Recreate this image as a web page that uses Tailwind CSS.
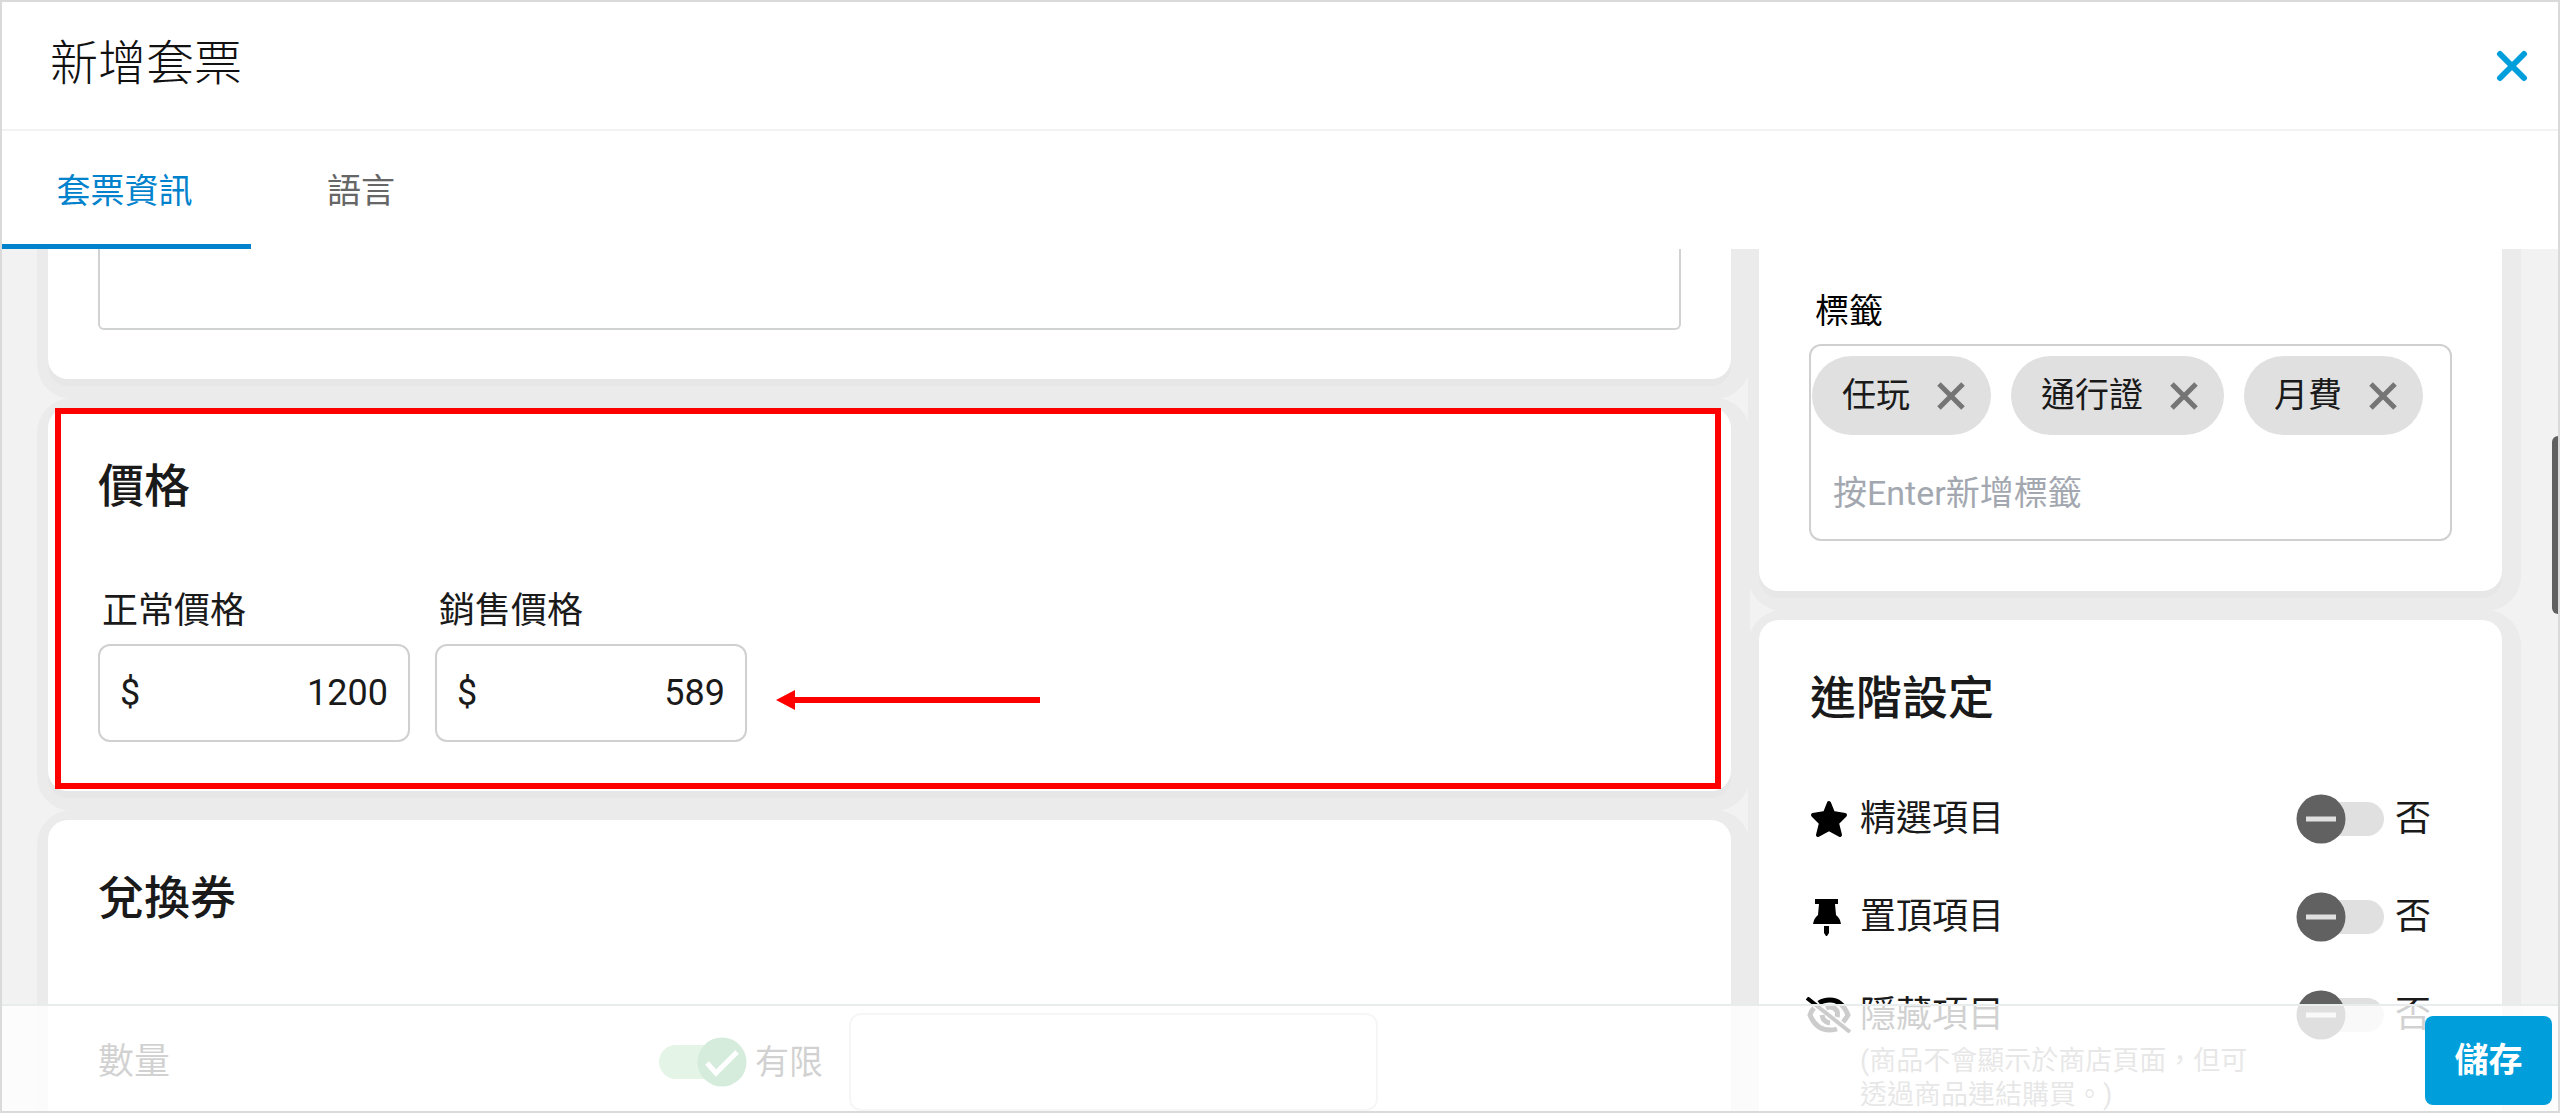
<!DOCTYPE html>
<html lang="zh-Hant">
<head>
    <meta charset="UTF-8">
    <meta name="viewport" content="width=device-width, initial-scale=1.0">
    <title>新增套票</title>
    <script src="https://cdn.jsdelivr.net/npm/@tailwindcss/browser@4"></script>
</head>
<body class="font-[Roboto,'Noto_Sans_CJK_TC',sans-serif] text-[#1a1a1a]">
    <div class="relative flex h-screen flex-col overflow-hidden border-2 border-[#dadada] bg-white">
        <header class="flex h-[129px] shrink-0 items-center justify-between border-b-2 border-[#f2f2f2] pl-12 pr-7">
            <h1 class="pb-1 text-[48px] leading-[56px] font-light text-[#111]">新增套票</h1>
            <button type="button" aria-label="關閉" class="p-0.5">
                <svg class="size-8" viewBox="0 0 32 32" fill="none" stroke="#009fdb" stroke-width="6" stroke-linecap="round"><path d="M4 4l24 24M28 4L4 28"/></svg>
            </button>
        </header>

        <nav class="flex h-[118px] shrink-0 text-[34px]">
            <button type="button" class="w-[249px] border-b-[5px] border-[#0082cd] pt-2 pr-1 text-[#0082cd]">套票資訊</button>
            <button type="button" class="w-[220px] border-b-[5px] border-transparent pt-2 text-[#666]">語言</button>
        </nav>

        <main class="flex min-h-0 flex-1 items-start gap-7 overflow-hidden bg-[#f2f2f2] pl-[46px] pr-[56px]">
            <div class="flex min-w-0 flex-1 flex-col gap-[29px]">
                <section class="rounded-b-[20px] bg-white px-[50px] pb-[49px] shadow-[0_7px_0_0_#e7e7e7,4px_5px_0_15px_#ebebeb]">
                    <textarea aria-label="說明" class="block h-[81px] w-full resize-none rounded-b-[6px] border-2 border-t-0 border-[#d0d3d2]"></textarea>
                </section>

                <section class="relative rounded-[20px] bg-white px-[50px] pt-[50px] pb-[49px] shadow-[0_7px_0_0_#e7e7e7,4px_5px_0_15px_#ebebeb]">
                    <h2 class="text-[46px] leading-[56px] font-medium">價格</h2>
                    <div class="mt-[77px] flex items-end gap-[25px]">
                        <div class="w-[312px]">
                            <label for="normalPrice" class="block pl-1 text-[36px] leading-[40px]">正常價格</label>
                            <div class="mt-[13px] flex h-[98px] items-center rounded-[12px] border-2 border-[#d0d0d0] px-5 text-[36px]">
                                <span>$</span>
                                <input id="normalPrice" type="text" value="1200" class="w-full min-w-0 text-right outline-none">
                            </div>
                        </div>
                        <div class="w-[312px]">
                            <label for="salePrice" class="block pl-1 text-[36px] leading-[40px]">銷售價格</label>
                            <div class="mt-[13px] flex h-[98px] items-center rounded-[12px] border-2 border-[#d0d0d0] px-5 text-[36px]">
                                <span>$</span>
                                <input id="salePrice" type="text" value="589" class="w-full min-w-0 text-right outline-none">
                            </div>
                        </div>
                        <svg class="mb-8 ml-1 h-5 w-[264px]" viewBox="0 0 264 20" fill="#f00"><path d="M0 10L19 0v20z"/><path d="M18 7h246v6H18z"/></svg>
                    </div>
                    <!-- highlight frame -->
                    <div class="pointer-events-none absolute top-0 right-[10px] bottom-[2px] left-[7px] border-[6px] border-[#f00]"></div>
                </section>

                <section class="rounded-[20px] bg-white px-[50px] pt-[50px] pb-[49px] shadow-[0_7px_0_0_#e7e7e7,4px_5px_0_15px_#ebebeb]">
                    <h2 class="text-[46px] leading-[56px] font-medium">兌換券</h2>
                    <div class="mt-[87px] flex items-center">
                        <label for="quantity" class="w-[561px] text-[36px]">數量</label>
                        <label class="flex items-center gap-2 text-[34px]">
                            <span class="relative flex h-[50px] w-[88px] items-center">
                                <input type="checkbox" checked class="h-[34px] w-20 appearance-none rounded-full bg-[#78c882]">
                                <svg class="absolute top-0 right-0 size-[50px]" viewBox="0 0 50 50"><circle cx="25" cy="25" r="24.5" fill="#2da055"/><path d="M10 26l9 10L40 15" fill="none" stroke="#fff" stroke-width="5"/></svg>
                            </span>
                            有限
                        </label>
                        <input id="quantity" type="text" class="ml-[26px] h-[98px] w-[529px] rounded-[12px] border-2 border-[#d0d0d0]">
                    </div>
                </section>
            </div>

            <div class="flex w-[743px] shrink-0 flex-col gap-[29px]">
                <section class="rounded-b-[20px] bg-white px-[50px] pt-[42px] pb-[50px] shadow-[0_7px_0_0_#e7e7e7,4px_5px_0_15px_#ebebeb]">
                    <label for="tags" class="block pl-1.5 text-[34px] leading-[40px] text-black">標籤</label>
                    <div class="mt-[13px] h-[197px] rounded-[12px] border-2 border-[#d0d0d0] pt-[10px]">
                        <div class="flex gap-5 pl-px text-[34px]">
                            <span class="flex h-[79px] items-center gap-[27px] rounded-full bg-[#e0e0e0] pr-[26px] pl-[30px]">任玩
                                <button type="button" aria-label="移除任玩"><svg class="size-7" viewBox="0 0 28 28" fill="none" stroke="#757575" stroke-width="5"><path d="M2 2l24 24M26 2L2 26"/></svg></button>
                            </span>
                            <span class="flex h-[79px] items-center gap-[27px] rounded-full bg-[#e0e0e0] pr-[26px] pl-[30px]">通行證
                                <button type="button" aria-label="移除通行證"><svg class="size-7" viewBox="0 0 28 28" fill="none" stroke="#757575" stroke-width="5"><path d="M2 2l24 24M26 2L2 26"/></svg></button>
                            </span>
                            <span class="flex h-[79px] items-center gap-[27px] rounded-full bg-[#e0e0e0] pr-[26px] pl-[30px]">月費
                                <button type="button" aria-label="移除月費"><svg class="size-7" viewBox="0 0 28 28" fill="none" stroke="#757575" stroke-width="5"><path d="M2 2l24 24M26 2L2 26"/></svg></button>
                            </span>
                        </div>
                        <input id="tags" type="text" placeholder="按Enter新增標籤" class="mt-[18px] h-20 w-full px-[22px] text-[34px] outline-none placeholder:text-[#a3a8b0]">
                    </div>
                </section>

                <section class="rounded-[20px] bg-white py-[50px] pr-[71px] pl-[51px] shadow-[0_7px_0_0_#e7e7e7,4px_5px_0_15px_#ebebeb]">
                    <h2 class="text-[46px] leading-[56px] font-medium">進階設定</h2>
                    <div class="mt-[68px] flex flex-col gap-12 text-[36px]">
                        <label class="flex h-[50px] items-center">
                            <span class="w-[50px]"><svg class="size-[38px]" viewBox="0 0 38 38" fill="#000" stroke="#000" stroke-width="4" stroke-linejoin="round"><path d="M19 3l4 10 12 2-8 8 3 12-11-6-11 6 3-12-8-8 12-2z"/></svg></span>
                            <span class="flex-1">精選項目</span>
                            <span class="relative flex h-[50px] w-[88px] items-center justify-end">
                                <input type="checkbox" class="h-[34px] w-20 appearance-none rounded-full bg-[#e0e0e0]">
                                <svg class="absolute top-0 left-0 size-[50px]" viewBox="0 0 50 50"><circle cx="25" cy="25" r="24.5" fill="#616161"/><path d="M10 25h30" stroke="#e0e0e0" stroke-width="5"/></svg>
                            </span>
                            <span class="pl-[11px]">否</span>
                        </label>
                        <label class="flex h-[50px] items-center">
                            <span class="w-[50px]"><svg class="h-[37px] w-9" viewBox="0 0 36 37" fill="#000"><path d="M5 0h23v5h-3l1 11q4 3 5 9H3q1-6 5-9l1-11H5z"/><path d="M14 27h5v7l-2 3h-1l-2-3z"/></svg></span>
                            <span class="flex-1">置頂項目</span>
                            <span class="relative flex h-[50px] w-[88px] items-center justify-end">
                                <input type="checkbox" class="h-[34px] w-20 appearance-none rounded-full bg-[#e0e0e0]">
                                <svg class="absolute top-0 left-0 size-[50px]" viewBox="0 0 50 50"><circle cx="25" cy="25" r="24.5" fill="#616161"/><path d="M10 25h30" stroke="#e0e0e0" stroke-width="5"/></svg>
                            </span>
                            <span class="pl-[11px]">否</span>
                        </label>
                        <div>
                            <label class="flex h-[50px] items-center">
                                <span class="w-[50px]"><svg class="-ml-1 h-9 w-[46px]" viewBox="0 0 46 36" fill="none" stroke="#000" stroke-width="5"><path d="M1 1l43 34" stroke-width="4"/><path d="M13 6q4-3 11-3 12 0 18 15-2 4-5 7M8 11q-3 3-4 7 6 15 20 15 4 0 7-1"/><path d="M20 11q7-3 11 3 1 3 0 6M16 18q1 7 8 8"/></svg></span>
                                <span class="flex-1">隱藏項目</span>
                                <span class="relative flex h-[50px] w-[88px] items-center justify-end">
                                    <input type="checkbox" class="h-[34px] w-20 appearance-none rounded-full bg-[#e0e0e0]">
                                    <svg class="absolute top-0 left-0 size-[50px]" viewBox="0 0 50 50"><circle cx="25" cy="25" r="24.5" fill="#616161"/><path d="M10 25h30" stroke="#e0e0e0" stroke-width="5"/></svg>
                                </span>
                                <span class="pl-[11px]">否</span>
                            </label>
                            <p class="mt-1 pl-[50px] text-[27px] leading-[34px] whitespace-nowrap text-[#888]">(商品不會顯示於商店頁面，但可<br>透過商品連結購買。)</p>
                        </div>
                    </div>
                </section>
            </div>
        </main>

        <!-- scrollbar thumb -->
        <div class="absolute top-[434px] right-0 h-[178px] w-[6px] rounded-l-full bg-[#606060]"></div>

        <footer class="absolute inset-x-0 bottom-0 flex h-[107px] items-center justify-end border-t-2 border-[#e9ecec] bg-white/80 pt-1 pr-1.5">
            <button type="button" class="h-[89px] w-[127px] rounded-[8px] bg-[#009fdb] text-[34px] font-bold text-white">儲存</button>
        </footer>
    </div>
</body>
</html>
